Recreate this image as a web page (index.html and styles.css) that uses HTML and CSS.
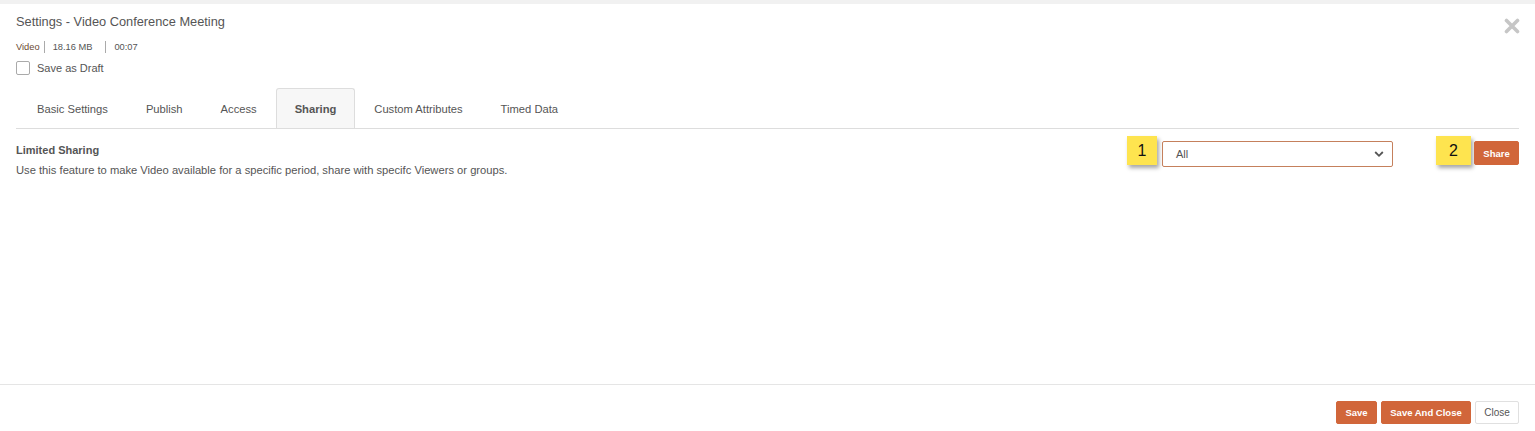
FILE: index.html
```html
<!DOCTYPE html>
<html>
<head>
<meta charset="utf-8">
<link rel="stylesheet" href="styles.css">
</head>
<body>
<div class="strip"></div>
<div class="modal">
  <div class="header">
    <div class="title">Settings - Video Conference Meeting</div>
    <button class="close-x" aria-label="Close">
      <svg width="16" height="16" viewBox="0 0 16 16"><path d="M2.5 2.5 L13.5 13.5 M13.5 2.5 L2.5 13.5" stroke="#c6c6c6" stroke-width="3.6" stroke-linecap="round"/></svg>
    </button>
    <div class="meta">
      <span class="meta-type">Video</span><span class="meta-size">18.16 MB</span><span class="meta-dur">00:07</span>
    </div>
    <label class="draft"><span class="checkbox"></span><span>Save as Draft</span></label>
  </div>
  <div class="tabs">
    <div class="tab">Basic Settings</div>
    <div class="tab">Publish</div>
    <div class="tab">Access</div>
    <div class="tab active">Sharing</div>
    <div class="tab">Custom Attributes</div>
    <div class="tab">Timed Data</div>
  </div>
  <div class="content">
    <div class="intro">
      <div class="intro-title">Limited Sharing</div>
      <div class="intro-desc">Use this feature to make Video available for a specific period, share with specifc Viewers or groups.</div>
    </div>
    <div class="controls">
      <div class="badge b1">1</div>
      <div class="select"><span>All</span>
        <svg width="10" height="8" viewBox="0 0 10 8"><path d="M1.2 2 L5 5.8 L8.8 2" stroke="#555" stroke-width="1.8" fill="none"/></svg>
      </div>
      <div class="badge b2">2</div>
      <button class="btn orange share">Share</button>
    </div>
  </div>
  <div class="footer">
    <button class="btn orange">Save</button>
    <button class="btn orange">Save And Close</button>
    <button class="btn plain">Close</button>
  </div>
</div>
</body>
</html>
```

FILE: styles.css
```css
* { box-sizing: border-box; }
html, body { margin: 0; padding: 0; background: #fff; }
body {
  font-family: "Liberation Sans", Arial, sans-serif;
  color: #555;
  width: 1535px;
  height: 431px;
  overflow: hidden;
}
.strip { height: 4px; background: #f1f1f1; }
.modal {
  height: 427px;
  display: flex;
  flex-direction: column;
}
.header {
  position: relative;
  padding: 10px 16px 0;
}
.title {
  font-size: 12.8px;
  line-height: 16px;
  color: #555;
}
.close-x {
  position: absolute;
  right: 15px;
  top: 14px;
  width: 16px;
  height: 16px;
  padding: 0;
  border: 0;
  background: none;
}
.close-x svg { display: block; }
.meta {
  margin-top: 11px;
  font-size: 9.3px;
  line-height: 12px;
  display: flex;
  align-items: center;
}
.meta-type {
  color: #6b4a32;
  padding-right: 4px;
  border-right: 1px solid #aaa;
}
.meta-size {
  margin-left: 8px;
  padding-right: 13px;
  border-right: 1px solid #aaa;
}
.meta-dur { margin-left: 8px; }
.draft {
  margin-top: 8px;
  display: flex;
  align-items: center;
  font-size: 11px;
  line-height: 14px;
  color: #555;
}
.checkbox {
  width: 14px;
  height: 14px;
  border: 1px solid #aaa;
  border-radius: 2px;
  margin-right: 7px;
  background: #fff;
}
.tabs {
  margin: 13px 16px 0;
  padding-left: 2px;
  display: flex;
  border-bottom: 1px solid #ddd;
  height: 41px;
}
.tab {
  height: 40px;
  line-height: 40px;
  padding: 0 18px;
  font-size: 11.2px;
  color: #555;
  border: 1px solid transparent;
  border-bottom: 0;
}
.tab.active {
  background: #f7f7f7;
  border-color: #ddd;
  border-radius: 3px 3px 0 0;
  font-weight: bold;
  color: #555;
}
.content {
  flex: 1;
  padding: 0 16px;
  display: flex;
  justify-content: space-between;
}
.intro { padding-top: 14px; font-size: 11px; line-height: 14px; }
.intro-title { font-weight: bold; color: #555; }
.intro-desc { margin-top: 6px; color: #555; font-size: 11.2px; }
.controls {
  display: flex;
  align-items: flex-start;
  padding-top: 7px;
}
.badge {
  height: 29px;
  background: #fee44f;
  box-shadow: 2px 3px 4px rgba(0, 0, 0, 0.35);
  color: #111;
  font-size: 16px;
  line-height: 29px;
  text-align: center;
}
.b1 { width: 30px; margin-right: 5px; }
.b2 { width: 35px; margin-left: 43px; margin-right: 3px; }
.select {
  margin-top: 5px;
  width: 231px;
  height: 26px;
  border: 1px solid #c5805c;
  border-radius: 2px;
  display: flex;
  align-items: center;
  justify-content: space-between;
  padding: 0 8px 0 13px;
  font-size: 11px;
  color: #555;
}
.select svg { display: block; }
.btn {
  font-family: "Liberation Sans", Arial, sans-serif;
  font-size: 9.5px;
  height: 23px;
  border-radius: 2px;
  padding: 0 9px;
  cursor: pointer;
}
.btn.orange {
  background: #d1663a;
  color: #fff;
  font-weight: bold;
  border: 1px solid #d1663a;
}
.btn.plain {
  background: #fff;
  color: #555;
  border: 1px solid #e0e0e0;
  font-size: 10px;
}
.share { margin-top: 5px; height: 24px; width: 45px; padding: 0; }
.footer {
  height: 47px;
  border-top: 1px solid #e5e5e5;
  display: flex;
  justify-content: flex-end;
  gap: 4px;
  padding: 16px 16px 0;
  align-items: flex-start;
}
.footer .btn:nth-child(1) { width: 41px; padding: 0; }
.footer .btn:nth-child(2) { width: 90px; padding: 0; }
.footer .btn:nth-child(3) { width: 44px; padding: 0; }
```
